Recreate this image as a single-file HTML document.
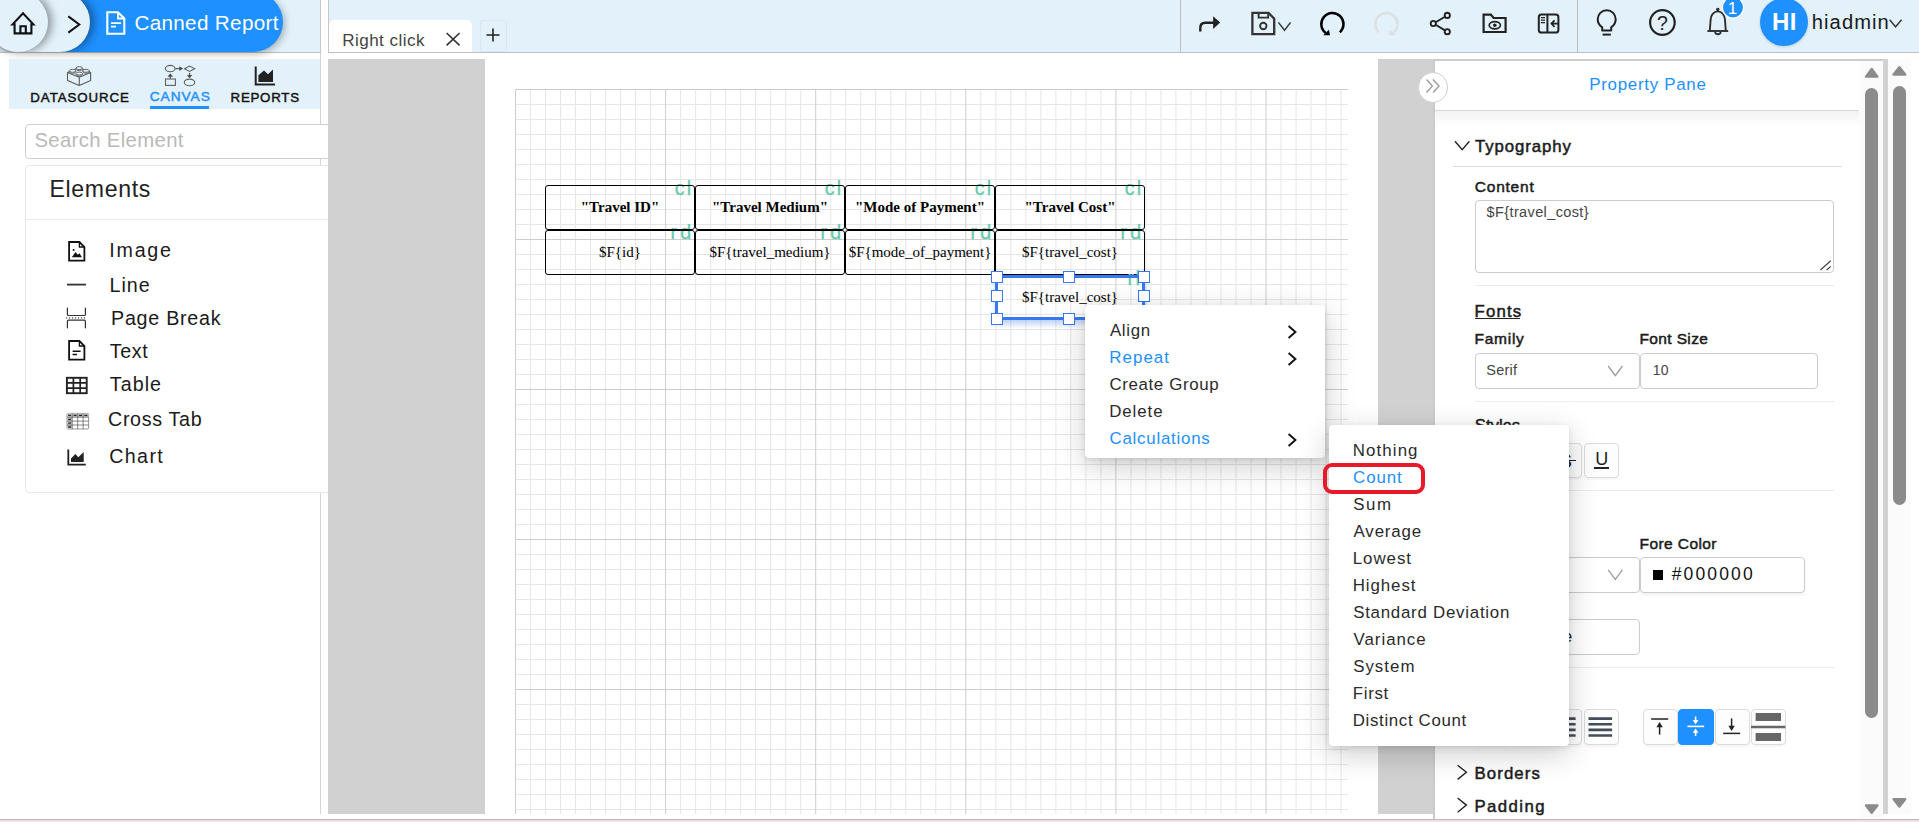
<!DOCTYPE html>
<html lang="en"><head><meta charset="utf-8"><title>Canned Report</title>
<style>
html,body{margin:0;padding:0;background:#fff;}
body{width:1919px;height:822px;overflow:hidden;font-family:"Liberation Sans",sans-serif;}
#app{position:relative;width:1919px;height:822px;overflow:hidden;background:#fff;}
.b{position:absolute;box-sizing:border-box;}
.t{position:absolute;line-height:0;white-space:nowrap;}
svg{position:absolute;overflow:visible;}
.pill{position:absolute;box-sizing:border-box;border-radius:30px;height:60px;top:-8px;}
.cell{position:absolute;box-sizing:border-box;border:1px solid #000;border-radius:3px;width:150px;height:45px;}
.h{position:absolute;box-sizing:border-box;width:12px;height:12px;background:#fff;border:1px solid #3878f2;}
.btn{position:absolute;box-sizing:border-box;width:35px;height:35px;border:1px solid #dcdcdc;border-radius:4px;background:#fdfdfd;box-shadow:0 2px 2px rgba(0,0,0,.04);}
.inp{position:absolute;box-sizing:border-box;border:1px solid #ccc;border-radius:4px;background:#fff;}
.menu{position:absolute;box-sizing:border-box;background:#fff;border-radius:4px;box-shadow:0 3px 14px rgba(0,0,0,.28);}

</style></head>
<body>
<div id="app">
<!-- top bar -->
<div class="b" style="left:0px;top:0px;width:1919px;height:52px;background:#e2f1fa;"></div>
<div class="b" style="left:0px;top:52px;width:1919px;height:1px;background:#bebebe;"></div>
<div class="b" style="left:321px;top:0px;width:7px;height:53px;background:#fff;"></div>
<div class="b" style="left:328px;top:0px;width:1px;height:52px;background:#c8c8c8;"></div>
<div class="b" style="left:1180px;top:0px;width:1px;height:52px;background:#bdbdbd;"></div>
<div class="b" style="left:1577px;top:0px;width:1px;height:52px;background:#bdbdbd;"></div>
<div class="b" style="left:0;top:0;width:320px;height:60px;overflow:hidden;">
<div class="pill" style="left:-12px;width:295px;background:#1e90ff;box-shadow:2px 2px 7px rgba(0,0,0,.28);"></div>
</div>
<div class="b" style="left:0;top:0;width:320px;height:52px;overflow:hidden;">
<div class="pill" style="left:-12px;width:102px;background:#e2f1fa;box-shadow:4px 0 8px rgba(0,0,0,.38);"></div>
<div class="pill" style="left:-12px;width:60px;background:#e2f1fa;box-shadow:4px 0 8px rgba(0,0,0,.38);"></div>
</div>
<span class="t" style="left:134.38px;top:22.50px;font-size:20.7px;color:#fff;letter-spacing:0.316px;">Canned Report</span>
<div class="b" style="left:329px;top:20px;width:143px;height:32px;background:#fff;border-radius:5px 5px 0 0;"></div>
<span class="t" style="left:342.16px;top:40.50px;font-size:17.08px;color:#444;letter-spacing:0.453px;">Right click</span>
<div class="b" style="left:480px;top:20px;width:27px;height:32px;border:1px solid #d8e8f2;border-radius:3px;"></div>
<span class="t" style="left:1811.76px;top:22.00px;font-size:20.18px;color:#1a1a1a;letter-spacing:1.069px;">hiadmin</span>
<svg style="left:0;top:0" width="1919" height="60" viewBox="0 0 1919 60" fill="none" stroke-linecap="butt">
<g stroke="#111" stroke-width="2.1" stroke-linejoin="miter"><path d="M14.6,33.4 V24.4 H12.6 L23,13.4 L33.4,24.4 H31.4 V33.4 Z" stroke-linejoin="miter"/><path d="M20.4,33.4 V26.2 H25.8 V33.4"/></g>
<path d="M68.3,16.4 L79.3,24.5 L68.3,32.6" stroke="#111" stroke-width="2"/>
<g stroke="#fff" stroke-width="2.1" stroke-linejoin="miter"><path d="M107.3,12.2 H118 L124.3,18.5 V33.8 H107.3 Z"/><path d="M118,12.2 V18.5 H124.3" stroke-width="1.8"/><path d="M111,23.2 H121 M111,26.6 H116" stroke-width="1.7"/></g>
<path d="M446.6,33 L459.6,45.4 M459.6,33 L446.6,45.4" stroke="#333" stroke-width="1.6"/>
<path d="M486.5,35 H499.5 M493,28.5 V41.5" stroke="#222" stroke-width="1.6"/>
<path d="M1196,36.4 H1223 M1251,36.4 H1292 M1319,36.4 H1346 M1373,36.4 H1400 M1427,36.4 H1454 M1481,36.4 H1508" stroke="#edf3f5" stroke-width="1"/>
<path d="M1200.3,31.6 V27.8 Q1200.3,22.7 1205.4,22.7 H1214" stroke="#222" stroke-width="2.4"/><path d="M1213.1,16.2 L1220.2,22.6 L1213.1,29 Z" fill="#222"/>
<g stroke="#333" stroke-width="2.3" stroke-linejoin="miter"><path d="M1252.4,12.9 H1268.6 L1274.2,18.6 V34.2 H1252.4 Z"/><path d="M1258.6,12.9 V17.6 H1268.2 V12.9" stroke-width="1.9"/><circle cx="1263.3" cy="26" r="3.2" stroke-width="1.9"/></g>
<path d="M1278.4,22.4 L1284.5,30.3 L1290.6,22.4" stroke="#333" stroke-width="1.4"/>
<path d="M1339.9,32.3 A11.1,11.1 0 1 0 1325.6,32.9" stroke="#000" stroke-width="2.5"/><path d="M1323.4,35.3 H1330 L1328.9,29.8 Z" fill="#000"/>
<path d="M1378.9,32.3 A11.1,11.1 0 1 1 1393.2,32.9" stroke="#dbe0e3" stroke-width="2.5"/><path d="M1395.4,35.3 H1388.8 L1389.9,29.8 Z" fill="#dbe0e3"/>
<g stroke="#222" stroke-width="1.9"><path d="M1445,16.7 L1435.6,22.3 M1435.6,24.7 L1445,30.4"/><circle cx="1447.3" cy="15.4" r="2.6"/><circle cx="1433.3" cy="23.5" r="2.6"/><circle cx="1447.3" cy="31.7" r="2.6"/></g>
<g stroke="#222" stroke-width="2.2" stroke-linejoin="miter"><path d="M1483.6,32 V14.6 H1490.8 L1493.6,18 H1505.6 V32 Z"/></g><ellipse cx="1494.8" cy="25.2" rx="5.6" ry="3.6" stroke="#222" stroke-width="1.7"/><circle cx="1494.8" cy="25.2" r="1.8" fill="#222"/>
<g stroke="#222"><rect x="1538.8" y="14.6" width="19.6" height="18" rx="2.6" stroke-width="2"/><path d="M1547.4,14.6 V32.6" stroke-width="2"/><path d="M1540.9,17.7 H1545 M1540.9,20.2 H1545 M1540.9,22.7 H1545" stroke-width="1.3"/><path d="M1558,23.6 H1551.6 M1554.6,20.4 L1551.4,23.6 L1554.6,26.8" stroke-width="1.7"/></g>
<g stroke="#222" stroke-width="2" stroke-linejoin="round"><path d="M1602.2,30.6 V27.4 C1599.4,25.4 1597.7,22.6 1597.7,19.2 A9,9 0 0 1 1615.7,19.2 C1615.7,22.6 1614,25.4 1611.2,27.4 V30.6 Z"/><path d="M1602.6,34.6 H1610.8"/></g>
<circle cx="1662.4" cy="22.5" r="12.3" stroke="#222" stroke-width="2.2"/>
<text x="1662.4" y="29.6" font-size="19.5" text-anchor="middle" fill="#222" stroke="none" font-family="Liberation Sans, sans-serif">?</text>
<g stroke="#2e2e2e" stroke-width="1.9" stroke-linejoin="round"><path d="M1707.4,31 H1728.2"/><path d="M1709.8,31 L1710.6,20 A7.2,8.6 0 0 1 1725,20 L1725.8,31"/><circle cx="1717.8" cy="9.6" r="0.8" fill="#2e2e2e"/><path d="M1715,32 A3,3 0 0 0 1720.8,32"/></g>
<circle cx="1733" cy="7.5" r="10.6" fill="#1e90ff" stroke="#fff" stroke-width="1.2"/>
<text x="1732.6" y="13.6" font-size="17" text-anchor="middle" fill="#fff" stroke="none" font-family="Liberation Sans, sans-serif">1</text>
<path d="M1889.6,19.8 L1895.6,26.8 L1901.6,19.8" stroke="#333" stroke-width="1.4"/>
</svg>
<div class="b" style="left:1760px;top:-2.5px;width:48px;height:48px;border-radius:50%;background:#1e90ff;box-shadow:0 1px 3px rgba(0,0,0,.15);z-index:0;"></div>
<span class="t" style="left:1772.05px;top:21.50px;font-size:24px;color:#fff;letter-spacing:0.492px;font-weight:700;z-index:1;">HI</span>
<!-- left panel -->
<div class="b" style="left:320px;top:53px;width:1px;height:761px;background:#d4d4d4;"></div>
<div class="b" style="left:320px;top:0px;width:1px;height:52px;background:#c8c8c8;"></div>
<div class="b" style="left:9px;top:59px;width:311px;height:50px;background:#e2f1fa;"></div>
<span class="t" style="left:30.35px;top:97.50px;font-size:13.3px;color:#111;letter-spacing:0.917px;-webkit-text-stroke:0.45px currentColor;">DATASOURCE</span>
<span class="t" style="left:149.79px;top:96.50px;font-size:13.7px;color:#1e90ff;letter-spacing:0.956px;-webkit-text-stroke:0.45px currentColor;">CANVAS</span>
<div class="b" style="left:150px;top:106px;width:59px;height:3px;background:#1e90ff;"></div>
<span class="t" style="left:230.55px;top:97.50px;font-size:13.3px;color:#111;letter-spacing:0.739px;-webkit-text-stroke:0.45px currentColor;">REPORTS</span>
<div class="inp" style="left:25px;top:124px;width:312px;height:35px;border-color:#cfcfcf;"></div>
<span class="t" style="left:34.45px;top:140.00px;font-size:20.29px;color:#b9b9b9;letter-spacing:0.361px;">Search Element</span>
<div class="b" style="left:25px;top:165px;width:312px;height:328px;border:1px solid #e7e7e7;border-radius:4px;background:#fff;"></div>
<div class="b" style="left:26px;top:219px;width:310px;height:1px;background:#e9e9e9;"></div>
<span class="t" style="left:49.46px;top:189.00px;font-size:23.08px;color:#222;letter-spacing:0.675px;">Elements</span>
<span class="t" style="left:109.31px;top:250.00px;font-size:19.66px;color:#1a1a1a;letter-spacing:1.760px;">Image</span>
<span class="t" style="left:109.43px;top:285.00px;font-size:19.66px;color:#1a1a1a;letter-spacing:1.073px;">Line</span>
<span class="t" style="left:111.03px;top:318.00px;font-size:19.66px;color:#1a1a1a;letter-spacing:0.759px;">Page Break</span>
<span class="t" style="left:109.74px;top:351.00px;font-size:19.66px;color:#1a1a1a;letter-spacing:0.671px;">Text</span>
<span class="t" style="left:109.74px;top:384.00px;font-size:19.66px;color:#1a1a1a;letter-spacing:1.078px;">Table</span>
<span class="t" style="left:108.01px;top:419.00px;font-size:19.66px;color:#1a1a1a;letter-spacing:0.682px;">Cross Tab</span>
<span class="t" style="left:109.21px;top:456.00px;font-size:19.66px;color:#1a1a1a;letter-spacing:1.383px;">Chart</span>
<svg style="left:0;top:59px" width="328" height="440" viewBox="0 59 328 440" fill="none">
<g stroke="#5a5a5a" stroke-width=".9" stroke-linejoin="round" fill="#e2f1fa"><path d="M67.5,72.4 L79.25,67.6 L90.6,72.4 V80.6 L79.25,85.5 L67.5,80.6 Z" stroke-width="1.1"/><path d="M67.5,72.4 L79.25,77.2 L90.6,72.4 M79.25,77.2 V85.5" fill="none" stroke-width="1.1"/><path d="M76.05,68.10 V69.10 A3.2,1.5 0 0 0 82.45,69.10 V68.10"/><ellipse cx="79.25" cy="68.1" rx="3.2" ry="1.5"/><path d="M69.40,70.80 V71.80 A3.2,1.5 0 0 0 75.80,71.80 V70.80"/><ellipse cx="72.6" cy="70.8" rx="3.2" ry="1.5"/><path d="M82.80,70.80 V71.80 A3.2,1.5 0 0 0 89.20,71.80 V70.80"/><ellipse cx="86.0" cy="70.8" rx="3.2" ry="1.5"/><path d="M76.05,73.60 V74.60 A3.2,1.5 0 0 0 82.45,74.60 V73.60"/><ellipse cx="79.25" cy="73.6" rx="3.2" ry="1.5"/></g>
<g stroke="#606060" stroke-width="1.1"><ellipse cx="170.2" cy="68.6" rx="4.9" ry="3.2"/><path d="M175.2,68.6 H180" stroke-width="1.3"/><path d="M179.6,66.7 L182.6,68.6 L179.6,70.5 Z" fill="#444" stroke="#444" stroke-width=".5"/><path d="M184.5,68.8 L189.6,66.1 L194.7,68.8 L189.6,71.5 Z"/><path d="M189.6,72.8 V76" stroke-width="1.3"/><path d="M187.4,75.3 L189.6,78 L191.8,75.3 Z" fill="#444" stroke="#444" stroke-width=".5"/><ellipse cx="189.5" cy="82.4" rx="5.2" ry="3.3"/><rect x="165.5" y="79" width="9.9" height="6.4"/><path d="M170.3,78.8 V75.6" stroke-width="1.3"/><path d="M168.1,76.4 L170.3,73.7 L172.5,76.4 Z" fill="#444" stroke="#444" stroke-width=".5"/></g>
<path d="M255.7,66.4 V84.6 H275" stroke="#222" stroke-width="2"/><path d="M258.4,82 V75.2 L264,70.6 L268,74.2 L273,69.6 V82 Z" fill="#222"/>
<g stroke="#111" stroke-width="1.8" stroke-linejoin="miter"><path d="M69.1,242 H79.4 L84.4,247 V260.6 H69.1 Z"/><path d="M79.4,242 V247 H84.4" stroke-width="1.3"/></g><path d="M71.8,257.2 L75.6,252 L77.8,254.8 L79.4,253.2 L82,257.2 Z" fill="#111"/><circle cx="73.6" cy="250" r="1" fill="#111"/>
<path d="M67,284.6 H86" stroke="#333" stroke-width="1.8"/>
<g stroke="#333" stroke-width="1.2" stroke-linecap="round"><path d="M67.4,308 V314.5 Q67.4,315.5 68.4,315.5 H84.4 Q85.4,315.5 85.4,314.5 V308"/><path d="M67.4,327.8 V321.2 Q67.4,320.2 68.4,320.2 H84.4 Q85.4,320.2 85.4,321.2 V327.8"/><path d="M66,317.9 H86.8" stroke="#7a7a7a" stroke-width="1.7" stroke-dasharray="1.2,1.77" stroke-linecap="butt"/></g>
<g stroke="#111" stroke-width="1.8" stroke-linejoin="miter"><path d="M69.1,341 H79.4 L84.4,346 V359.6 H69.1 Z"/><path d="M79.4,341 V346 H84.4" stroke-width="1.3"/><path d="M72.6,351.2 H80.6 M72.6,354.6 H77" stroke-width="1.5"/></g>
<g stroke="#222"><rect x="66.9" y="377.8" width="19.8" height="15.4" stroke-width="1.9"/><path d="M73.4,377.8 V393.2 M80.2,377.8 V393.2 M66.9,382.9 H86.7 M66.9,388.1 H86.7" stroke-width="1.7"/></g>
<g><rect x="67" y="413.4" width="21.6" height="15.6" fill="#fff" stroke="#8a8a8a" stroke-width=".9" rx="1"/><rect x="67" y="413.4" width="21.6" height="3.8" fill="#c6c6c6"/><rect x="67" y="413.4" width="5.2" height="15.6" fill="#c6c6c6"/><path d="M72.2,413.4 V429 M77.7,413.4 V429 M83.1,413.4 V429 M67,417.2 H88.6 M67,421.1 H88.6 M67,425 H88.6" stroke="#5c5c5c" stroke-width=".75"/><path d="M68.2,415.4 H71 M73.6,415.4 H76.6 M79,415.4 H82 M84.4,415.4 H87.4 M68.2,419.3 H71 M68.2,423.1 H71 M68.2,427 H71" stroke="#222" stroke-width="1.3"/></g>
<path d="M68.3,449.4 V464.7 H85.8" stroke="#222" stroke-width="1.8"/><path d="M71,461.9 V458.6 L75.3,454 L78.3,457.2 L83.7,452 V461.9 Z" fill="#222"/>
</svg>
<!-- workspace -->
<div class="b" style="left:328px;top:59px;width:1560px;height:755px;background:#d1d1d1;"></div>
<div class="b" style="left:485px;top:59px;width:893px;height:755px;background:#fff;"></div>
<svg style="left:0;top:0" width="1348" height="814" viewBox="0 0 1348 814" fill="none"><path d="M530.51,89 V814 M545.52,89 V814 M560.53,89 V814 M575.54,89 V814 M590.55,89 V814 M605.56,89 V814 M620.57,89 V814 M635.58,89 V814 M650.59,89 V814 M680.62,89 V814 M695.63,89 V814 M710.64,89 V814 M725.65,89 V814 M740.66,89 V814 M755.67,89 V814 M770.68,89 V814 M785.69,89 V814 M800.70,89 V814 M830.72,89 V814 M845.73,89 V814 M860.74,89 V814 M875.75,89 V814 M890.76,89 V814 M905.77,89 V814 M920.78,89 V814 M935.79,89 V814 M950.80,89 V814 M980.83,89 V814 M995.84,89 V814 M1010.85,89 V814 M1025.86,89 V814 M1040.87,89 V814 M1055.88,89 V814 M1070.89,89 V814 M1085.90,89 V814 M1100.91,89 V814 M1130.93,89 V814 M1145.94,89 V814 M1160.95,89 V814 M1175.96,89 V814 M1190.97,89 V814 M1205.98,89 V814 M1220.99,89 V814 M1236.00,89 V814 M1251.01,89 V814 M1281.04,89 V814 M1296.05,89 V814 M1311.06,89 V814 M1326.07,89 V814 M1341.08,89 V814 M515,104.5 H1348 M515,119.5 H1348 M515,134.5 H1348 M515,149.5 H1348 M515,164.5 H1348 M515,179.5 H1348 M515,194.5 H1348 M515,209.5 H1348 M515,224.5 H1348 M515,254.5 H1348 M515,269.5 H1348 M515,284.5 H1348 M515,299.5 H1348 M515,314.5 H1348 M515,329.5 H1348 M515,344.5 H1348 M515,359.5 H1348 M515,374.5 H1348 M515,404.5 H1348 M515,419.5 H1348 M515,434.5 H1348 M515,449.5 H1348 M515,464.5 H1348 M515,479.5 H1348 M515,494.5 H1348 M515,509.5 H1348 M515,524.5 H1348 M515,554.5 H1348 M515,569.5 H1348 M515,584.5 H1348 M515,599.5 H1348 M515,614.5 H1348 M515,629.5 H1348 M515,644.5 H1348 M515,659.5 H1348 M515,674.5 H1348 M515,704.5 H1348 M515,719.5 H1348 M515,734.5 H1348 M515,749.5 H1348 M515,764.5 H1348 M515,779.5 H1348 M515,794.5 H1348 M515,809.5 H1348" stroke="#e6e6e6" stroke-width="1"/><path d="M515.50,89 V814 M665.61,89 V814 M815.71,89 V814 M965.82,89 V814 M1115.92,89 V814 M1266.03,89 V814 M515,89.5 H1348 M515,239.5 H1348 M515,389.5 H1348 M515,539.5 H1348 M515,689.5 H1348" stroke="#cdcdcd" stroke-width="1"/></svg>
<span class="t" style="left:674.70px;top:188.00px;font-size:19.66px;color:#64caad;letter-spacing:2.129px;-webkit-text-stroke:0.25px currentColor;">cl</span>
<span class="t" style="left:670.62px;top:232.00px;font-size:19.66px;color:#64caad;letter-spacing:3.078px;-webkit-text-stroke:0.25px currentColor;">rd</span>
<span class="t" style="left:824.70px;top:188.00px;font-size:19.66px;color:#64caad;letter-spacing:2.129px;-webkit-text-stroke:0.25px currentColor;">cl</span>
<span class="t" style="left:820.62px;top:232.00px;font-size:19.66px;color:#64caad;letter-spacing:3.078px;-webkit-text-stroke:0.25px currentColor;">rd</span>
<span class="t" style="left:974.70px;top:188.00px;font-size:19.66px;color:#64caad;letter-spacing:2.129px;-webkit-text-stroke:0.25px currentColor;">cl</span>
<span class="t" style="left:970.62px;top:232.00px;font-size:19.66px;color:#64caad;letter-spacing:3.078px;-webkit-text-stroke:0.25px currentColor;">rd</span>
<span class="t" style="left:1124.70px;top:188.00px;font-size:19.66px;color:#64caad;letter-spacing:2.129px;-webkit-text-stroke:0.25px currentColor;">cl</span>
<span class="t" style="left:1120.62px;top:232.00px;font-size:19.66px;color:#64caad;letter-spacing:3.078px;-webkit-text-stroke:0.25px currentColor;">rd</span>
<div class="cell" style="left:545px;top:185px;font-family:'Liberation Serif',serif;font-size:15px;display:flex;align-items:center;justify-content:center;color:#000;white-space:nowrap;font-weight:700;"><span>"Travel ID"</span></div>
<div class="cell" style="left:545px;top:230px;font-family:'Liberation Serif',serif;font-size:15px;display:flex;align-items:center;justify-content:center;color:#000;white-space:nowrap;"><span>$F{id}</span></div>
<div class="cell" style="left:695px;top:185px;font-family:'Liberation Serif',serif;font-size:15px;display:flex;align-items:center;justify-content:center;color:#000;white-space:nowrap;font-weight:700;"><span>"Travel Medium"</span></div>
<div class="cell" style="left:695px;top:230px;font-family:'Liberation Serif',serif;font-size:15px;display:flex;align-items:center;justify-content:center;color:#000;white-space:nowrap;"><span>$F{travel_medium}</span></div>
<div class="cell" style="left:845px;top:185px;font-family:'Liberation Serif',serif;font-size:15px;display:flex;align-items:center;justify-content:center;color:#000;white-space:nowrap;font-weight:700;"><span>"Mode of Payment"</span></div>
<div class="cell" style="left:845px;top:230px;font-family:'Liberation Serif',serif;font-size:15px;display:flex;align-items:center;justify-content:center;color:#000;white-space:nowrap;"><span>$F{mode_of_payment}</span></div>
<div class="cell" style="left:995px;top:185px;font-family:'Liberation Serif',serif;font-size:15px;display:flex;align-items:center;justify-content:center;color:#000;white-space:nowrap;font-weight:700;"><span>"Travel Cost"</span></div>
<div class="cell" style="left:995px;top:230px;font-family:'Liberation Serif',serif;font-size:15px;display:flex;align-items:center;justify-content:center;color:#000;white-space:nowrap;"><span>$F{travel_cost}</span></div>
<span class="t" style="left:1127.42px;top:278.00px;font-size:19.66px;color:#64caad;letter-spacing:1.484px;-webkit-text-stroke:0.25px currentColor;">rl</span>
<div class="b" style="left:995px;top:275px;width:150px;height:45px;border:3px solid #3878f2;box-shadow:0 5px 6px -1px rgba(59,120,231,.35);font-family:'Liberation Serif',serif;font-size:15px;display:flex;align-items:center;justify-content:center;color:#000;white-space:nowrap;"><span>$F{travel_cost}</span></div>
<div class="h" style="left:991px;top:271px;"></div>
<div class="h" style="left:991px;top:290px;"></div>
<div class="h" style="left:991px;top:313px;"></div>
<div class="h" style="left:1063px;top:271px;"></div>
<div class="h" style="left:1063px;top:313px;"></div>
<div class="h" style="left:1138px;top:271px;"></div>
<div class="h" style="left:1138px;top:290px;"></div>
<div class="h" style="left:1138px;top:313px;"></div>
<!-- property pane -->
<div class="b" style="left:1433px;top:59px;width:2px;height:760px;background:#cbcbcb;"></div>
<div class="b" style="left:1435px;top:59px;width:453px;height:2px;background:#cbcbcb;"></div>
<div class="b" style="left:1435px;top:61px;width:448px;height:758px;background:#fff;"></div>
<div class="b" style="left:1883px;top:59px;width:5px;height:755px;background:#d2d2d2;"></div>
<div class="b" style="left:1435px;top:111px;width:424px;height:16px;background:linear-gradient(rgba(0,0,0,.05),rgba(0,0,0,0));"></div>
<div class="b" style="left:1435px;top:61px;width:424px;height:50px;background:#fff;border-bottom:1px solid #d9d9d9;"></div>
<span class="t" style="left:1589.17px;top:84.50px;font-size:16.97px;color:#1e90ff;letter-spacing:0.697px;">Property Pane</span>
<div class="b" style="left:1417.8px;top:72.3px;width:30.4px;height:30.4px;border-radius:50%;background:#fff;border:1px solid #d0d0d0;"></div>
<span class="t" style="left:1475.08px;top:146.50px;font-size:16.77px;color:#1c1c1c;letter-spacing:0.918px;-webkit-text-stroke:0.5px currentColor;">Typography</span>
<div class="b" style="left:1453px;top:166px;width:389px;height:1px;background:#dcdcdc;"></div>
<span class="t" style="left:1474.83px;top:186.50px;font-size:15.52px;color:#1c1c1c;letter-spacing:0.753px;-webkit-text-stroke:0.5px currentColor;">Content</span>
<div class="inp" style="left:1475px;top:200px;width:359px;height:73px;"></div>
<span class="t" style="left:1486.61px;top:212.00px;font-size:14.49px;color:#444;letter-spacing:0.383px;">$F{travel_cost}</span>
<div class="b" style="left:1475px;top:285px;width:359px;height:1px;background:#ececec;"></div>
<span class="t" style="left:1474.47px;top:311.50px;font-size:16.77px;color:#1c1c1c;letter-spacing:1.184px;-webkit-text-stroke:0.5px currentColor;">Fonts</span>
<div class="b" style="left:1475px;top:318.2px;width:45px;height:1.2px;background:#222;"></div>
<span class="t" style="left:1474.54px;top:338.50px;font-size:15.52px;color:#1c1c1c;letter-spacing:0.723px;-webkit-text-stroke:0.5px currentColor;">Family</span>
<span class="t" style="left:1639.54px;top:338.50px;font-size:15.52px;color:#1c1c1c;letter-spacing:0.350px;-webkit-text-stroke:0.5px currentColor;">Font Size</span>
<div class="inp" style="left:1475px;top:353px;width:164.5px;height:36px;"></div>
<div class="inp" style="left:1640px;top:353px;width:178px;height:36px;"></div>
<span class="t" style="left:1486.31px;top:370.00px;font-size:14.49px;color:#444;letter-spacing:0.208px;">Serif</span>
<span class="t" style="left:1652.66px;top:370.00px;font-size:14px;color:#444;letter-spacing:0.228px;">10</span>
<div class="b" style="left:1475px;top:401px;width:359px;height:1px;background:#ececec;"></div>
<span class="t" style="left:1474.85px;top:425.50px;font-size:16.77px;color:#1c1c1c;letter-spacing:-0.061px;-webkit-text-stroke:0.5px currentColor;">Styles</span>
<div class="btn" style="left:1475px;top:442.5px;"></div>
<div class="btn" style="left:1511px;top:442.5px;"></div>
<div class="btn" style="left:1547px;top:442.5px;"></div>
<div class="btn" style="left:1583.5px;top:442.5px;"></div>
<span class="t" style="left:1487.50px;top:458.00px;font-size:16.3px;color:#222;font-weight:700;">B</span>
<span class="t" style="left:1526.50px;top:458.00px;font-size:16.3px;color:#222;font-style:italic;">I</span>
<span class="t" style="left:1558.00px;top:460.50px;font-size:21px;color:#222;">S</span>
<span class="t" style="left:1595.20px;top:459.00px;font-size:18px;color:#222;">U</span>
<div class="b" style="left:1594px;top:467.4px;width:15px;height:1.8px;background:#222;"></div>
<div class="b" style="left:1554px;top:459.5px;width:22px;height:1.8px;background:#222;"></div>
<div class="b" style="left:1475px;top:490px;width:359px;height:1px;background:#ececec;"></div>
<span class="t" style="left:1474.80px;top:514.50px;font-size:16.77px;color:#1c1c1c;letter-spacing:0.195px;-webkit-text-stroke:0.5px currentColor;">Colors</span>
<span class="t" style="left:1474.54px;top:543.50px;font-size:15.52px;color:#1c1c1c;letter-spacing:0.401px;-webkit-text-stroke:0.5px currentColor;">Back Color</span>
<span class="t" style="left:1639.54px;top:543.50px;font-size:15.52px;color:#1c1c1c;letter-spacing:0.412px;-webkit-text-stroke:0.5px currentColor;">Fore Color</span>
<div class="inp" style="left:1475px;top:557px;width:164.5px;height:36px;"></div>
<div class="inp" style="left:1640px;top:557px;width:165px;height:36px;box-shadow:0 2px 3px rgba(0,0,0,.06);"></div>
<span class="t" style="left:1486.70px;top:575.00px;font-size:14.49px;color:#444;">None</span>
<div class="b" style="left:1653px;top:570px;width:10.4px;height:10.4px;background:#000;"></div>
<span class="t" style="left:1671.66px;top:574.00px;font-size:17.5px;color:#111;letter-spacing:2.151px;">#000000</span>
<div class="inp" style="left:1475px;top:619px;width:164.5px;height:35.5px;"></div>
<span class="t" style="left:1486.25px;top:636.50px;font-size:16.56px;color:#14233d;letter-spacing:-0.515px;">Select Value</span>
<div class="b" style="left:1475px;top:667px;width:359px;height:1px;background:#ececec;"></div>
<span class="t" style="left:1475.28px;top:690.50px;font-size:16.77px;color:#1c1c1c;letter-spacing:0.447px;-webkit-text-stroke:0.5px currentColor;">Alignment</span>
<div class="btn" style="left:1475px;top:709.3px;height:35.5px;"></div>
<div class="btn" style="left:1511px;top:709.3px;height:35.5px;"></div>
<div class="btn" style="left:1547px;top:709.3px;height:35.5px;"></div>
<div class="btn" style="left:1583.5px;top:709.3px;height:35.5px;"></div>
<div class="btn" style="left:1642.5px;top:709.3px;height:35.5px;"></div>
<div class="btn" style="left:1714.5px;top:709.3px;height:35.5px;"></div>
<div class="btn" style="left:1750.5px;top:709.3px;height:35.5px;"></div>
<div class="btn" style="left:1678px;top:709px;width:36.4px;height:36px;background:#1e90ff;border-color:#1e90ff;"></div>
<span class="t" style="left:1474.47px;top:773.50px;font-size:16.77px;color:#1c1c1c;letter-spacing:1.108px;-webkit-text-stroke:0.5px currentColor;">Borders</span>
<span class="t" style="left:1474.47px;top:806.50px;font-size:16.77px;color:#1c1c1c;letter-spacing:1.434px;-webkit-text-stroke:0.5px currentColor;">Padding</span>
<svg style="left:1400px;top:59px" width="519" height="763" viewBox="1400 59 519 763" fill="none">
<path d="M1426.5,79.5 L1432.4,86 L1426.5,92.5 M1433,79.5 L1439,86 L1433,92.5" stroke="#9a9a9a" stroke-width="1.3"/>
<path d="M1455,141.2 L1462.2,149.6 L1469.4,141.2" stroke="#222" stroke-width="1.4"/>
<path d="M1457.6,765.2 L1466.4,772.3 L1457.6,779.4" stroke="#222" stroke-width="1.4"/>
<path d="M1457.6,798 L1466.4,805.1 L1457.6,812.2" stroke="#222" stroke-width="1.4"/>
<path d="M1820.4,270 L1830.8,260.8 M1826.6,270 L1830.8,266.4" stroke="#444" stroke-width="1.2"/>
<path d="M1608.2,366 L1615.3,375.6 L1622.4,366" stroke="#9c9c9c" stroke-width="1.3"/>
<path d="M1608.2,569.8 L1615.3,579.4 L1622.4,569.8" stroke="#9c9c9c" stroke-width="1.3"/>
<path d="M1480.0,718.6 H1503.6 M1480.0,724.2 H1495.6 M1480.0,729.9 H1503.6 M1480.0,735.5 H1495.6" stroke="#444e5a" stroke-width="2.6"/>
<path d="M1516.0,718.6 H1539.6 M1520.0,724.2 H1535.6 M1516.0,729.9 H1539.6 M1520.0,735.5 H1535.6" stroke="#444e5a" stroke-width="2.6"/>
<path d="M1552.0,718.6 H1575.6 M1560.0,724.2 H1575.6 M1552.0,729.9 H1575.6 M1560.0,735.5 H1575.6" stroke="#444e5a" stroke-width="2.6"/>
<path d="M1588.5,718.6 H1612.1 M1588.5,724.2 H1612.1 M1588.5,729.9 H1612.1 M1588.5,735.5 H1612.1" stroke="#444e5a" stroke-width="2.6"/>
<g stroke="#222" stroke-width="1.5"><path d="M1651.2,719 H1668.2"/><path d="M1659.6,734.6 V725"/></g><path d="M1656.4,727.2 L1659.6,722 L1662.8,727.2 Z" fill="#222"/>
<g stroke="#fff" stroke-width="1.6"><path d="M1687.4,726.4 H1704.2"/><path d="M1695.6,716.6 V721 M1695.6,736 V731.6"/></g><path d="M1692.8,720 L1695.6,724.4 L1698.4,720 Z M1692.8,732.8 L1695.6,728.4 L1698.4,732.8 Z" fill="#fff"/>
<g stroke="#222" stroke-width="1.5"><path d="M1723.2,733.4 H1740.2"/><path d="M1731.6,718.4 V728"/></g><path d="M1728.4,725.8 L1731.6,731 L1734.8,725.8 Z" fill="#222"/>
<rect x="1755.6" y="713" width="25.4" height="8" fill="#666"/><rect x="1755.6" y="733" width="25.4" height="8" fill="#666"/><path d="M1751,727 H1785.4" stroke="#666" stroke-width="2.6"/>
</svg>
<div class="b" style="left:1859px;top:61px;width:24px;height:758px;background:#fbfbfb;"></div>
<div class="b" style="left:1865px;top:88px;width:13px;height:630px;background:#8b8b8b;border-radius:6.5px;"></div>
<div class="b" style="left:1888px;top:59px;width:23px;height:755px;background:#fbfbfb;"></div>
<div class="b" style="left:1893px;top:86px;width:13px;height:419px;background:#8b8b8b;border-radius:6.5px;"></div>
<svg style="left:1859px;top:59px" width="60" height="763" viewBox="1859 59 60 763"><g fill="#8b8b8b" stroke="#8b8b8b" stroke-width="2.4" stroke-linejoin="round"><path d="M1871.7,69 L1877.4,76.6 H1866 Z"/><path d="M1899.4,67.2 L1905.2,74.6 H1893.6 Z"/><path d="M1871.7,812.8 L1877.4,805.4 H1866 Z"/><path d="M1899.4,806.6 L1905.2,799.2 H1893.6 Z"/></g></svg>
<div class="b" style="left:0px;top:819px;width:1919px;height:1px;background:#c7b4b6;"></div>
<div class="b" style="left:0px;top:820px;width:1919px;height:2px;background:#eee3e3;"></div>
<!-- context menus -->
<div class="menu" style="left:1085px;top:305px;width:240px;height:153px;box-shadow:0 8px 30px rgba(0,0,0,.20),0 2px 6px rgba(0,0,0,.10);"></div>
<span class="t" style="left:1109.98px;top:330.50px;font-size:16.87px;color:#2a2a2a;letter-spacing:0.649px;">Align</span>
<span class="t" style="left:1109.17px;top:357.50px;font-size:16.87px;color:#1e90ff;letter-spacing:1.099px;">Repeat</span>
<span class="t" style="left:1109.49px;top:384.50px;font-size:16.87px;color:#2a2a2a;letter-spacing:0.631px;">Create Group</span>
<span class="t" style="left:1109.17px;top:411.50px;font-size:16.87px;color:#2a2a2a;letter-spacing:0.934px;">Delete</span>
<span class="t" style="left:1109.49px;top:438.50px;font-size:16.87px;color:#1e90ff;letter-spacing:0.769px;">Calculations</span>
<svg style="left:1085px;top:305px" width="240" height="153" viewBox="1085 305 240 153" fill="none"><path d="M1288.6,326 L1295.4,332 L1288.6,338 M1288.6,353 L1295.4,359 L1288.6,365 M1288.6,434 L1295.4,440 L1288.6,446" stroke="#151515" stroke-width="2"/></svg>
<div class="menu" style="left:1329px;top:425px;width:240px;height:321px;box-shadow:0 8px 30px rgba(0,0,0,.20),0 2px 6px rgba(0,0,0,.10);"></div>
<span class="t" style="left:1352.77px;top:450.50px;font-size:16.87px;color:#2a2a2a;letter-spacing:1.102px;">Nothing</span>
<span class="t" style="left:1353.09px;top:477.50px;font-size:16.87px;color:#1e90ff;letter-spacing:0.884px;">Count</span>
<span class="t" style="left:1353.14px;top:504.50px;font-size:16.87px;color:#2a2a2a;letter-spacing:1.685px;">Sum</span>
<span class="t" style="left:1353.58px;top:531.50px;font-size:16.87px;color:#2a2a2a;letter-spacing:0.843px;">Average</span>
<span class="t" style="left:1352.77px;top:558.50px;font-size:16.87px;color:#2a2a2a;letter-spacing:0.968px;">Lowest</span>
<span class="t" style="left:1352.77px;top:585.50px;font-size:16.87px;color:#2a2a2a;letter-spacing:0.916px;">Highest</span>
<span class="t" style="left:1353.14px;top:612.50px;font-size:16.87px;color:#2a2a2a;letter-spacing:0.756px;">Standard Deviation</span>
<span class="t" style="left:1353.56px;top:639.50px;font-size:16.87px;color:#2a2a2a;letter-spacing:0.970px;">Variance</span>
<span class="t" style="left:1353.14px;top:666.50px;font-size:16.87px;color:#2a2a2a;letter-spacing:1.022px;">System</span>
<span class="t" style="left:1352.77px;top:693.50px;font-size:16.87px;color:#2a2a2a;letter-spacing:0.677px;">First</span>
<span class="t" style="left:1352.77px;top:720.50px;font-size:16.87px;color:#2a2a2a;letter-spacing:0.653px;">Distinct Count</span>
<div class="b" style="left:1323px;top:463px;width:102px;height:30.5px;border:4px solid #e61a2a;border-radius:9px;"></div>
</div>
</body></html>
